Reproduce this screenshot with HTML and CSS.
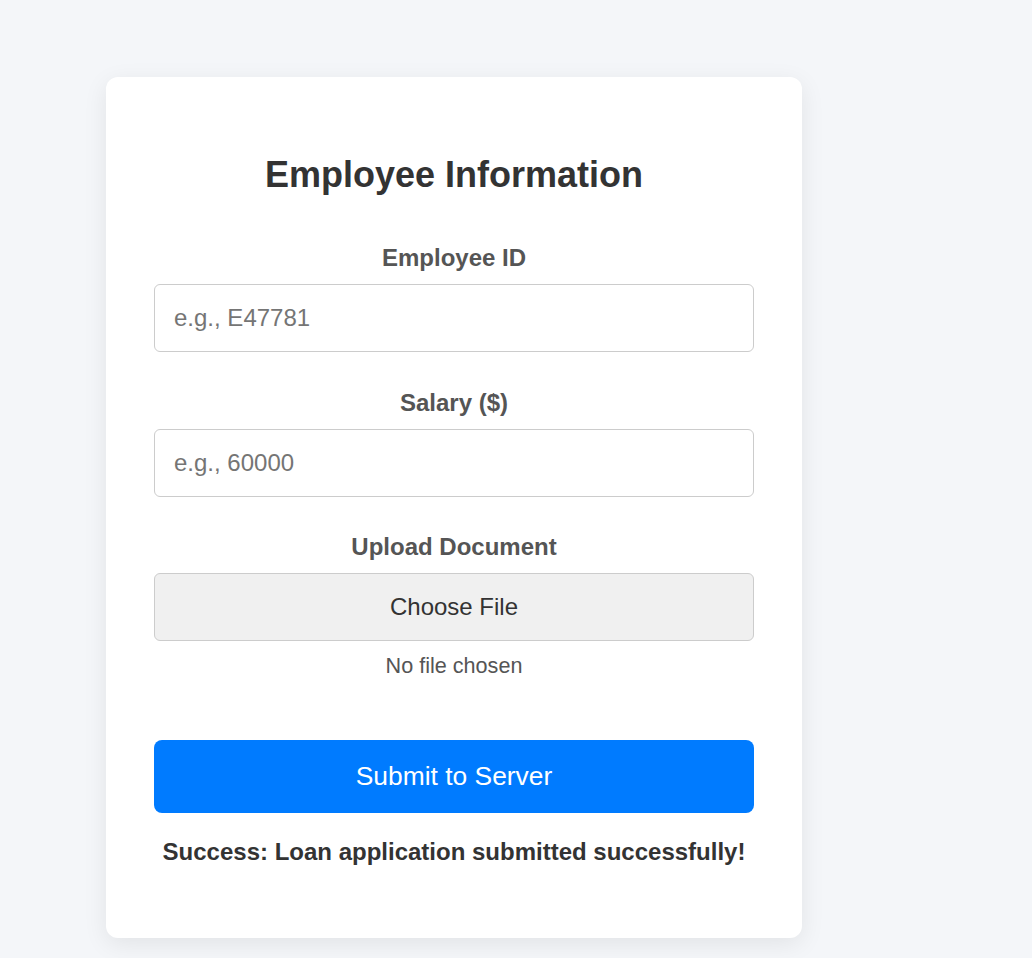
FILE: index.html
```html
<!DOCTYPE html>
<html lang="en">
<head>
<meta charset="utf-8">
<title>Employee Information</title>
<link rel="stylesheet" href="styles.css">
</head>
<body>
  <main class="card">
    <h2 class="title">Employee Information</h2>
    <div class="field">
      <label class="label" for="emp">Employee ID</label>
      <input class="input" id="emp" type="text" placeholder="e.g., E47781">
    </div>
    <div class="field">
      <label class="label" for="sal">Salary ($)</label>
      <input class="input" id="sal" type="text" placeholder="e.g., 60000">
    </div>
    <div class="field field-file">
      <span class="label">Upload Document</span>
      <div class="file-btn">Choose File</div>
      <span class="file-name">No file chosen</span>
    </div>
    <button class="submit" type="button">Submit to Server</button>
    <p class="message">Success: Loan application submitted successfully!</p>
  </main>
</body>
</html>
```
FILE: styles.css
```css
* { box-sizing: border-box; }
html, body { margin: 0; padding: 0; }
body {
  background: #f4f6f9;
  font-family: "Liberation Sans", Arial, sans-serif;
  padding: 77px 0 20px 106px;
  min-height: 958px;
}
.card {
  width: 696px;
  background: #ffffff;
  border-radius: 12px;
  box-shadow: 0 6px 24px rgba(0, 0, 0, 0.08);
  padding: 77px 48px 48px;
  text-align: center;
}
.title {
  margin: 0 0 49px;
  font-size: 36px;
  font-weight: bold;
  color: #333333;
  line-height: 41px;
}
.field {
  display: flex;
  flex-direction: column;
  gap: 12px;
  margin-bottom: 36.5px;
}
.label {
  font-size: 24px;
  font-weight: bold;
  color: #555555;
  line-height: 28px;
}
.input {
  height: 68px;
  width: 100%;
  border: 1px solid #cccccc;
  border-radius: 6px;
  padding: 0 19px;
  font-family: "Liberation Sans", Arial, sans-serif;
  font-size: 24px;
  color: #333;
  background: #fff;
  outline: none;
}
.input::placeholder { color: #757575; }
.file-btn {
  height: 68px;
  display: flex;
  align-items: center;
  justify-content: center;
  background: #f0f0f0;
  border: 1px solid #cccccc;
  border-radius: 6px;
  font-size: 24px;
  color: #333;
}
.file-name {
  font-size: 21.6px;
  color: #555555;
  line-height: 25px;
}
.field-file { margin-bottom: 62px; }
.submit {
  display: block;
  width: 100%;
  height: 73px;
  border: none;
  border-radius: 8px;
  background: #007bff;
  color: #ffffff;
  font-family: "Liberation Sans", Arial, sans-serif;
  font-size: 26.4px;
  cursor: pointer;
}
.message {
  margin: 25px 0 24px;
  font-size: 24px;
  font-weight: bold;
  color: #333333;
  line-height: 28px;
}
```
